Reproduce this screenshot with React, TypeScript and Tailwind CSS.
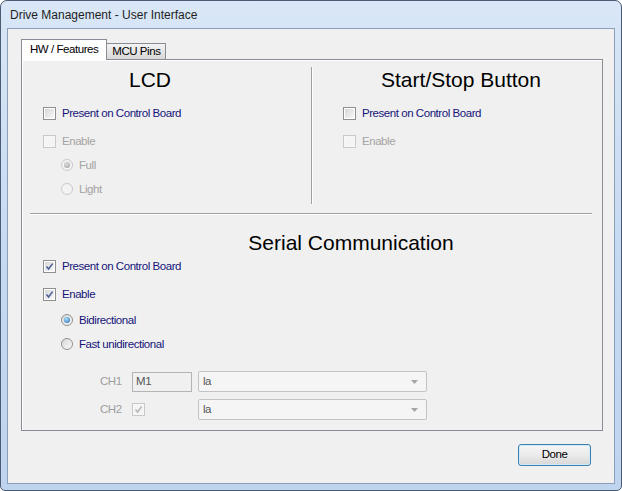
import clsx from "clsx";

const lbl = "text-[11.5px] leading-none tracking-[-0.45px] font-['Liberation_Sans',Arial,sans-serif]";
const head = "text-[21px] leading-none text-black font-['Liberation_Sans',Arial,sans-serif]";

function Check({ checked, disabled }: { checked?: boolean; disabled?: boolean }) {
  return (
    <span
      className={clsx(
        "w-[13px] h-[13px] border flex items-center justify-center shrink-0",
        disabled ? "border-[#c9c9c9] bg-[#f7f7f7]" : "border-[#8e8f8f] bg-white"
      )}
    >
      <span
        className={clsx(
          "w-[9px] h-[9px] flex items-center justify-center",
          disabled ? "bg-[#f4f4f4]" : "bg-gradient-to-br from-[#d6d7d8] to-[#f8f8f8]"
        )}
      >
        {checked && (
          <svg width="9" height="9" viewBox="0 0 9 9">
            <path
              d="M1.5 4.6 L3.6 7 L7.6 1.6"
              fill="none"
              stroke={disabled ? "#b5b5b5" : "#4a5d95"}
              strokeWidth="1.5"
            />
          </svg>
        )}
      </span>
    </span>
  );
}

function Radio({ checked, disabled }: { checked?: boolean; disabled?: boolean }) {
  return (
    <span
      className={clsx(
        "w-[12px] h-[12px] rounded-full border flex items-center justify-center shrink-0",
        disabled
          ? "border-[#c9c9c9] bg-[#f3f3f3]"
          : "border-[#8e8f8f] bg-gradient-to-br from-[#d8d9da] to-[#f9f9f9]"
      )}
    >
      {checked && (
        <span
          className={clsx(
            "w-[6px] h-[6px] rounded-full",
            disabled
              ? "bg-[radial-gradient(circle_at_40%_35%,#e0e0e0,#9a9a9a)]"
              : "bg-[radial-gradient(circle_at_40%_35%,#a6e6ff,#1f5eab)]"
          )}
        />
      )}
    </span>
  );
}

function Row({
  kind,
  checked,
  disabled,
  label,
  className,
}: {
  kind: "check" | "radio";
  checked?: boolean;
  disabled?: boolean;
  label: string;
  className?: string;
}) {
  return (
    <div className={clsx("h-[20px] flex items-center gap-[6px]", className)}>
      {kind === "check" ? (
        <Check checked={checked} disabled={disabled} />
      ) : (
        <Radio checked={checked} disabled={disabled} />
      )}
      <span className={clsx(lbl, "pt-[1px]", disabled ? "text-[#a3a3a3]" : "text-[#15157a]")}>{label}</span>
    </div>
  );
}

function Combo() {
  return (
    <div className="ml-[6px] w-[229px] h-[21px] border border-[#c3c3c3] rounded-[2px] bg-[#f5f5f5] flex items-center pl-[4px] pr-[8px]">
      <span className={clsx(lbl, "text-[#555] flex-1")}>la</span>
      <svg width="7" height="4" viewBox="0 0 7 4">
        <path d="M0 0 H7 L3.5 4 Z" fill="#a5a5a5" />
      </svg>
    </div>
  );
}

export default function App() {
  return (
    <div className="w-[622px] h-[491px] bg-white">
      <div className="w-[622px] h-[491px] rounded-t-[7px] rounded-b-[5px] border border-[#4b5c72] bg-gradient-to-b from-[#d9e7f7] via-[#c6daf1] to-[#bfd4ee] flex flex-col px-[6px] pb-[6px]">
        {/* title bar */}
        <div className="h-[27px] flex items-center pl-[3px] pt-[1px]">
          <span className="text-[12px] text-[#1e1e1e] font-['Liberation_Sans',Arial,sans-serif]">
            Drive Management - User Interface
          </span>
        </div>

        {/* client area */}
        <div className="flex-1 border border-[#8aa0ba] bg-[#f0f0f0] flex flex-col pt-[10px]">
          {/* tabs */}
          <div className="ml-[13px] h-[20px] flex items-end">
            <div className="relative z-10 -mb-[1px] h-[21px] px-[8px] border border-b-0 border-[#898c95] bg-white flex items-center">
              <span className={clsx(lbl, "text-black")}>HW / Features</span>
            </div>
            <div className="h-[16px] px-[5px] border border-l-0 border-b-0 border-[#898c95] bg-gradient-to-b from-[#f3f3f3] to-[#d8d8d8] flex items-center">
              <span className={clsx(lbl, "text-black")}>MCU Pins</span>
            </div>
          </div>

          {/* tab page */}
          <div className="ml-[13px] w-[582px] h-[372px] border border-[#898c95] bg-[#f0f0f0] shadow-[inset_1px_1px_0_#fff] flex flex-col">
            {/* top: LCD + Start/Stop */}
            <div className="h-[153px] flex">
              <div className="w-[289px] flex flex-col">
                <div className={clsx(head, "mt-[7px] h-[24px] w-[256px] flex items-center justify-center")}>LCD</div>
                <div className="pl-[21px] flex flex-col">
                  <Row kind="check" label="Present on Control Board" className="mt-[12px]" />
                  <Row kind="check" disabled label="Enable" className="mt-[8px]" />
                  <Row kind="radio" checked disabled label="Full" className="mt-[4px] ml-[18px]" />
                  <Row kind="radio" disabled label="Light" className="mt-[4px] ml-[18px]" />
                </div>
              </div>
              <div className="mt-[7px] h-[137px] w-[2px] border-l border-r border-l-[#a0a0a0] border-r-white" />
              <div className="flex-1 flex flex-col">
                <div className={clsx(head, "mt-[7px] ml-[8px] h-[24px] w-[280px] flex items-center justify-center")}>
                  Start/Stop Button
                </div>
                <div className="pl-[30px] flex flex-col">
                  <Row kind="check" label="Present on Control Board" className="mt-[12px]" />
                  <Row kind="check" disabled label="Enable" className="mt-[8px]" />
                </div>
              </div>
            </div>

            <div className="ml-[8px] w-[562px] h-[2px] border-t border-b border-t-[#a0a0a0] border-b-white" />

            {/* serial communication */}
            <div className={clsx(head, "mt-[15px] ml-[129px] h-[24px] w-[400px] flex items-center justify-center")}>
              Serial Communication
            </div>
            <div className="pl-[21px] flex flex-col">
              <Row kind="check" checked label="Present on Control Board" className="mt-[2px]" />
              <Row kind="check" checked label="Enable" className="mt-[8px]" />
              <Row kind="radio" checked label="Bidirectional" className="mt-[6px] ml-[18px]" />
              <Row kind="radio" label="Fast unidirectional" className="mt-[4px] ml-[18px]" />
            </div>

            <div className="mt-[17px] pl-[78px] h-[21px] flex items-center">
              <span className={clsx(lbl, "w-[32px] text-[#9d9d9d]")}>CH1</span>
              <div className="w-[60px] h-[20px] border border-[#b4b4b4] bg-[#f0f0f0] flex items-center pl-[3px]">
                <span className={clsx(lbl, "text-[#555]")}>M1</span>
              </div>
              <Combo />
            </div>
            <div className="mt-[7px] pl-[78px] h-[21px] flex items-center">
              <span className={clsx(lbl, "w-[32px] text-[#9d9d9d]")}>CH2</span>
              <div className="w-[60px] flex items-center">
                <Check checked disabled />
              </div>
              <Combo />
            </div>
          </div>

          {/* footer */}
          <div className="mt-[13px] flex justify-end pr-[23px]">
            <button className="w-[73px] h-[22px] rounded-[3px] border border-[#3c7fb1] bg-gradient-to-b from-[#f6f6f6] via-[#ebebeb] to-[#d7d7d7] shadow-[inset_0_0_0_1px_#cfeaf8] flex items-center justify-center">
              <span className={clsx(lbl, "text-black")}>Done</span>
            </button>
          </div>
        </div>
      </div>
    </div>
  );
}
